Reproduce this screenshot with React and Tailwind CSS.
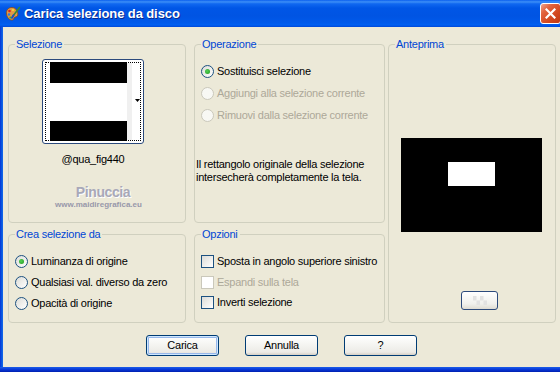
import React from "react";

function Group({ title, className = "", children }) {
  return (
    <fieldset
      className={`border border-[#D0D0BF] rounded-[4px] pl-[6px] pr-0 pb-0 pt-0 m-0 min-w-0 ${className}`}
    >
      <legend className="text-[#0046D5] leading-[13px] pl-[1px] pr-[2px]">{title}</legend>
      {children}
    </fieldset>
  );
}

function Radio({ checked, disabled, label }) {
  return (
    <div className="flex items-center h-[13px]">
      <span
        className={`w-[13px] h-[13px] shrink-0 rounded-full border flex items-center justify-center ${
          disabled
            ? "border-[#CAC8BB] bg-[#F8F8F4]"
            : "border-[#1C5180] bg-[linear-gradient(135deg,#DCDCD7,#FFFFFF)]"
        }`}
      >
        {checked && (
          <span className="w-[5px] h-[5px] rounded-full bg-[radial-gradient(circle_at_40%_40%,#55D055,#1E9A1E)]" />
        )}
      </span>
      <span className={`ml-[3px] leading-[13px] whitespace-nowrap ${disabled ? "text-[#ACA899]" : "text-black"}`}>
        {label}
      </span>
    </div>
  );
}

function Check({ disabled, label }) {
  return (
    <div className="flex items-center h-[13px]">
      <span
        className={`w-[13px] h-[13px] shrink-0 border ${
          disabled
            ? "border-[#CAC8BB] bg-white"
            : "border-[#1C5180] bg-[linear-gradient(135deg,#DCDCD7,#FFFFFF)]"
        }`}
      />
      <span className={`ml-[3px] leading-[13px] whitespace-nowrap ${disabled ? "text-[#ACA899]" : "text-black"}`}>
        {label}
      </span>
    </div>
  );
}

function XPButton({ children, def }) {
  return (
    <button
      type="button"
      className={`w-[73px] h-[21px] rounded-[3px] border border-[#003C74] bg-[linear-gradient(to_bottom,#FFFFFF_0%,#F6F6F3_40%,#ECEBE6_85%,#D6D0C5_100%)] flex items-center justify-center text-black leading-[13px] ${
        def ? "shadow-[inset_0_0_0_1px_#CEE7FF,inset_0_0_0_2px_#98B8EA]" : ""
      }`}
    >
      {children}
    </button>
  );
}

function PaletteIcon() {
  return (
    <svg width="16" height="16" viewBox="0 0 16 16" className="ml-[5px] shrink-0">
      <path
        d="M7 1.5 C3 1.5 1 4.5 1.5 8 C2 11.5 4.5 14.5 7.5 14 C9 13.7 8.5 12 9.5 11.3 C10.8 10.5 12.5 11 12.8 9 C13.2 6 11 1.5 7 1.5 Z"
        fill="#E29A45"
        stroke="#8A4A14"
        strokeWidth="0.8"
      />
      <circle cx="4.5" cy="5" r="1.3" fill="#E02020" />
      <circle cx="4" cy="8.5" r="1.2" fill="#2E7BE0" />
      <circle cx="5.5" cy="11.5" r="1.1" fill="#30B030" />
      <circle cx="8" cy="4" r="1.1" fill="#F5E030" />
      <path d="M14.5 1.5 L8 10" stroke="#3A8A30" strokeWidth="1.6" strokeLinecap="round" />
      <path d="M8.5 9.2 L7 11.8" stroke="#2050C0" strokeWidth="2" strokeLinecap="round" />
    </svg>
  );
}

function CloseButton() {
  return (
    <div className="ml-auto mr-[-1px] w-[21px] h-[21px] shrink-0 rounded-[3px] border border-white bg-[linear-gradient(135deg,#EFA58E_0%,#E2643F_28%,#D2481F_65%,#C03A14_100%)] flex items-center justify-center">
      <svg width="11" height="11" viewBox="0 0 11 11">
        <path d="M1.5 1.5 L9.5 9.5 M9.5 1.5 L1.5 9.5" stroke="white" strokeWidth="2.2" strokeLinecap="square" />
      </svg>
    </div>
  );
}

export default function App() {
  return (
    <div className="w-[560px] h-[372px] overflow-hidden flex flex-col font-['Liberation_Sans',Arial,sans-serif] text-[11px] tracking-[-0.25px] text-black select-none">
      {/* Title bar */}
      <div className="h-[27px] shrink-0 flex items-center bg-[linear-gradient(to_bottom,#0A5FEE_0%,#3D8FF7_7%,#1068F0_14%,#0056E6_30%,#0054E3_60%,#005AEB_85%,#0060F2_92%,#0048D8_100%)]">
        <PaletteIcon />
        <span className="ml-[3px] text-white text-[13px] font-bold tracking-[-0.1px] leading-[16px] [text-shadow:1px_1px_0_#0A2A8C]">
          Carica selezione da disco
        </span>
        <CloseButton />
      </div>

      <div className="flex-1 flex min-h-0">
        <div className="w-[3px] shrink-0 bg-[linear-gradient(to_right,#0831D9,#0855DD,#1668EE)]" />
        <div className="flex-1 bg-[#ECE9D8] flex flex-col pt-[11px] pl-[5px]">
          <div className="flex h-[285px]">
            {/* Left column */}
            <div className="w-[178px] flex flex-col gap-[5px]">
              <Group title="Selezione" className="h-[185px]">
                <div className="ml-[27px] mt-[8px] w-[102px] flex flex-col items-center">
                  <div className="w-[102px] h-[85px] rounded-[3px] border border-[#2C4A7C] bg-white p-[2px]">
                    <div className="h-full border border-dotted border-black flex pl-[4px]">
                      <div className="w-[78px] -my-[1px] flex flex-col">
                        <div className="h-[21px] bg-black" />
                        <div className="flex-1 bg-white" />
                        <div className="h-[20px] bg-black" />
                      </div>
                      <div className="flex-1 flex items-center justify-end">
                        <div className="w-[5px] h-full bg-[#F0F0F0] mr-[3px]" />
                        <svg width="5" height="3" viewBox="0 0 5 3" className="mb-[2px]">
                          <path d="M0 0 L5 0 L2.5 3 Z" fill="black" />
                        </svg>
                      </div>
                    </div>
                  </div>
                  <div className="mt-[9px] leading-[13px]">@qua_fig440</div>
                  <div className="w-[102px] mt-[18px] flex flex-col">
                    <div className="ml-[20px] text-center text-[14px] font-bold leading-[16px] tracking-[-0.4px] text-[#A8A8B8] [text-shadow:1px_1px_0_#FFFFFF]">
                      Pinuccia
                    </div>
                    <div className="ml-[11px] text-center text-[8px] font-bold leading-[10px] tracking-normal text-[#9898AA]">
                      www.maidiregrafica.eu
                    </div>
                  </div>
                </div>
              </Group>
              <Group title="Crea selezione da" className="h-[95px]">
                <div className="mt-[14px] flex flex-col gap-[8px]">
                  <Radio checked label="Luminanza di origine" />
                  <Radio label="Qualsiasi val. diverso da zero" />
                  <Radio label="Opacità di origine" />
                </div>
              </Group>
            </div>

            {/* Middle column */}
            <div className="ml-[8px] w-[191px] flex flex-col gap-[5px]">
              <Group title="Operazione" className="h-[185px]">
                <div className="mt-[14px] flex flex-col gap-[9px]">
                  <Radio checked label="Sostituisci selezione" />
                  <Radio disabled label="Aggiungi alla selezione corrente" />
                  <Radio disabled label="Rimuovi dalla selezione corrente" />
                </div>
                <div className="ml-[-5px] mt-[36px] leading-[13px]">
                  <div>Il rettangolo originale della selezione</div>
                  <div>intersecherà completamente la tela.</div>
                </div>
              </Group>
              <Group title="Opzioni" className="h-[95px]">
                <div className="mt-[14px] flex flex-col gap-[7.5px]">
                  <Check label="Sposta in angolo superiore sinistro" />
                  <Check disabled label="Espandi sulla tela" />
                  <Check label="Inverti selezione" />
                </div>
              </Group>
            </div>

            {/* Right column */}
            <div className="ml-[3px] w-[168px]">
              <Group title="Anteprima" className="h-[285px]">
                <div className="ml-[6px] mt-[87px] w-[141px] h-[94px] bg-black pl-[47px] pt-[24px]">
                  <div className="w-[47px] h-[24px] bg-white" />
                </div>
                <div className="ml-[66px] mt-[59px] w-[37px] h-[19px] rounded-[3px] border border-[#2C4A7C] bg-[linear-gradient(to_bottom,#FFFFFF,#F0F0EC_70%,#DEDBD2)] flex items-center justify-center">
                  <svg width="14" height="9" viewBox="0 0 14 9">
                    <rect x="0" y="0" width="3.5" height="4.5" fill="#E2E2E2" />
                    <rect x="7" y="0" width="3.5" height="4.5" fill="#E2E2E2" />
                    <rect x="3.5" y="4.5" width="3.5" height="4.5" fill="#E2E2E2" />
                    <rect x="10.5" y="4.5" width="3.5" height="4.5" fill="#E2E2E2" />
                  </svg>
                </div>
              </Group>
            </div>
          </div>

          {/* Buttons */}
          <div className="mt-[12px] pr-[5px] flex justify-center gap-[26px]">
            <XPButton def>Carica</XPButton>
            <XPButton>Annulla</XPButton>
            <XPButton>?</XPButton>
          </div>
        </div>
      </div>

      <div className="h-[5px] shrink-0 bg-[linear-gradient(to_bottom,#1C5EE8,#0838D8_50%,#0020B0)]" />
    </div>
  );
}
